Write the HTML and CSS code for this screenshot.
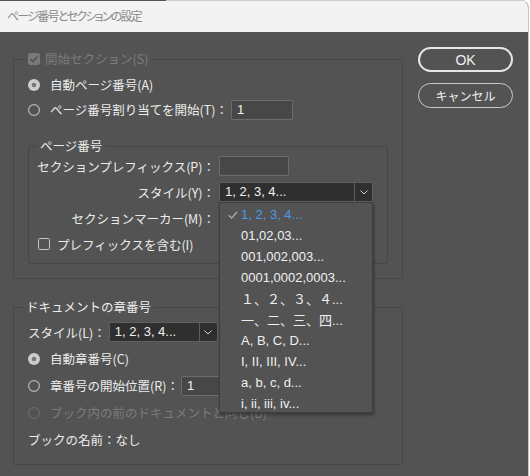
FILE: index.html
```html
<!DOCTYPE html>
<html lang="ja">
<head>
<meta charset="utf-8">
<title>ページ番号とセクションの設定</title>
<link rel="stylesheet" href="styles.css">
</head>
<body>
<div class="window">
  <div class="titlebar">ページ番号とセクションの設定</div>
  <div class="content">
    <div class="left">
      <fieldset class="group g1">
        <legend class="lg lg1">
          <svg class="cb" width="12" height="12" viewBox="0 0 12 12"><rect x="0.5" y="0.5" width="11" height="11" rx="1.5" fill="#7a7a7a" stroke="#7a7a7a"/><path d="M2.6 6.2 L5 8.5 L9.4 3.6" fill="none" stroke="#565656" stroke-width="1.8"/></svg>
          <span class="disabled">開始セクション(S)</span>
        </legend>
        <div class="row">
          <svg class="radio" width="12" height="12" viewBox="0 0 12 12"><circle cx="6" cy="6" r="6" fill="#cccccc"/><circle cx="6" cy="6" r="2.3" fill="#767676"/></svg>
          <span>自動ページ番号(A)</span>
        </div>
        <div class="row">
          <svg class="radio" width="12" height="12" viewBox="0 0 12 12"><circle cx="6" cy="6" r="5.4" fill="none" stroke="#b8b8b8" stroke-width="1.2"/></svg>
          <span>ページ番号割り当てを開始(T)：</span>
          <span class="input in1">1</span>
        </div>
        <fieldset class="group g2">
          <legend class="lg lg2">ページ番号</legend>
          <div class="frow">
            <span class="flabel">セクションプレフィックス(P)：</span>
            <span class="input in2"></span>
          </div>
          <div class="frow">
            <span class="flabel">スタイル(Y)：</span>
            <span class="select sel1"><span class="sel-text">1, 2, 3, 4...</span><span class="sel-arrow"><svg width="8" height="5" viewBox="0 0 8 5"><path d="M0.5 0.5 L4 4 L7.5 0.5" fill="none" stroke="#cfcfcf" stroke-width="1"/></svg></span></span>
          </div>
          <div class="frow">
            <span class="flabel">セクションマーカー(M)：</span>
          </div>
          <div class="frow crow">
            <svg class="cb" width="12" height="12" viewBox="0 0 12 12"><rect x="0.5" y="0.5" width="11" height="11" rx="1" fill="none" stroke="#c4c4c4"/></svg>
            <span>プレフィックスを含む(I)</span>
          </div>
        </fieldset>
      </fieldset>

      <fieldset class="group g3">
        <legend class="lg lg3">ドキュメントの章番号</legend>
        <div class="row3 first">
          <span>スタイル(L)：</span>
          <span class="select sel2"><span class="sel-text">1, 2, 3, 4...</span><span class="sel-arrow"><svg width="8" height="5" viewBox="0 0 8 5"><path d="M0.5 0.5 L4 4 L7.5 0.5" fill="none" stroke="#cfcfcf" stroke-width="1"/></svg></span></span>
        </div>
        <div class="row3">
          <svg class="radio" width="12" height="12" viewBox="0 0 12 12"><circle cx="6" cy="6" r="6" fill="#cccccc"/><circle cx="6" cy="6" r="2.3" fill="#767676"/></svg>
          <span>自動章番号(C)</span>
        </div>
        <div class="row3">
          <svg class="radio" width="12" height="12" viewBox="0 0 12 12"><circle cx="6" cy="6" r="5.4" fill="none" stroke="#b8b8b8" stroke-width="1.2"/></svg>
          <span>章番号の開始位置(R)：</span>
          <span class="input in3">1</span>
        </div>
        <div class="row3">
          <svg class="radio" width="12" height="12" viewBox="0 0 12 12"><circle cx="6" cy="6" r="5.4" fill="none" stroke="#6a6a6a" stroke-width="1.2"/></svg>
          <span class="disabled">ブック内の前のドキュメントと同じ(D)</span>
        </div>
        <div class="row3 last">
          <span>ブックの名前：なし</span>
        </div>
      </fieldset>
    </div>

    <div class="buttons">
      <div class="btn primary">OK</div>
      <div class="btn">キャンセル</div>
    </div>
  </div>

  <div class="dropdown">
    <div class="item selected"><span class="check"><svg width="10" height="8" viewBox="0 0 10 8"><path d="M0.8 4.2 L3.6 7 L9.2 0.8" fill="none" stroke="#a0a0a0" stroke-width="1.6"/></svg></span>1, 2, 3, 4...</div>
    <div class="item"><span class="check"></span>01,02,03...</div>
    <div class="item"><span class="check"></span>001,002,003...</div>
    <div class="item"><span class="check"></span>0001,0002,0003...</div>
    <div class="item"><span class="check"></span>１、２、３、４...</div>
    <div class="item"><span class="check"></span>一、二、三、四...</div>
    <div class="item"><span class="check"></span>A, B, C, D...</div>
    <div class="item"><span class="check"></span>I, II, III, IV...</div>
    <div class="item"><span class="check"></span>a, b, c, d...</div>
    <div class="item"><span class="check"></span>i, ii, iii, iv...</div>
  </div>
</div>
</body>
</html>
```

FILE: styles.css
```css
* { box-sizing: border-box; }
html, body { margin: 0; padding: 0; }
body {
  width: 530px;
  height: 476px;
  background: #ffffff;
  overflow: hidden;
  font-family: "Noto Sans CJK JP", "Noto Sans", sans-serif;
  font-size: 12.5px;
  color: #ececec;
  white-space: nowrap;
}
.window {
  position: relative;
  width: 529px;
  height: 476px;
  background: #535353;
  border-right: 1px solid #c8c8c8;
  border-top-right-radius: 8px;
  overflow: hidden;
}
.titlebar {
  height: 32px;
  line-height: 32px;
  padding-left: 7px;
  background: #f3f3f3 linear-gradient(to right, #555555 166px, #cfcfcf 166px) no-repeat top left / 100% 1px;
  color: #8a8a8a;
  font-size: 12px;
  font-feature-settings: "palt";
  letter-spacing: -1.75px;
}
.content {
  display: flex;
  align-items: flex-start;
}
.left {
  width: 403px;
  padding-left: 13px;
}
.group {
  margin: 0;
  min-width: 0;
  border: 1px solid #474747;
  border-radius: 2px;
}
.lg {
  line-height: 14px;
  padding: 0 3px;
  display: flex;
  align-items: center;
  gap: 5px;
}
.g1 {
  width: 390px;
  margin-top: 20px;
  padding: 6px 14px 14px 14px;
}
.lg1 { margin-left: -3px; }
.g2 {
  margin-top: 17px;
  padding: 0 10px 6px 6px;
}
.lg2 { margin-left: 2px; }
.g3 {
  width: 390px;
  margin-top: 21px;
  padding: 5px 14px 12px 14px;
}
.lg3 { margin-left: -5px; }
.disabled { color: #7b7b7b; }
.row {
  height: 25px;
  display: flex;
  align-items: center;
}
.radio { flex: none; margin-right: 10px; }
.cb { flex: none; }
.frow {
  height: 26px;
  display: flex;
  align-items: center;
}
.flabel {
  flex: none;
  width: 180px;
  display: flex;
  justify-content: flex-end;
  margin-right: 4px;
}
.crow { padding-left: 3px; }
.crow .cb { margin-right: 7px; }
.row3 {
  height: 27px;
  display: flex;
  align-items: center;
}
.row3.first { height: 26px; }
.row3.last { height: 26px; }
.input {
  flex: none;
  height: 20px;
  line-height: 18px;
  border: 1px solid #6c6c6c;
  border-radius: 2px;
  background: #474747;
  padding-left: 5px;
  color: #f2f2f2;
  font-family: "Liberation Sans", sans-serif;
  font-size: 13px;
}
.in1 { width: 62px; margin-left: 3px; }
.in2 { width: 70px; }
.in3 { width: 62px; margin-left: 2px; }
.select {
  flex: none;
  height: 20px;
  display: flex;
  border: 1px solid #5e5e5e;
  border-radius: 2px;
  background: #2f2f2f;
}
.sel1 { width: 154px; }
.sel2 { width: 109px; margin-left: 3px; }
.sel-text {
  flex: 1;
  line-height: 18px;
  padding-left: 5px;
  color: #f2f2f2;
  font-family: "Liberation Sans", sans-serif;
  font-size: 13px;
}
.sel-arrow {
  width: 18px;
  border-left: 1px solid #5e5e5e;
  display: flex;
  align-items: center;
  justify-content: center;
}
.buttons {
  margin-left: 15px;
  padding-top: 15px;
  display: flex;
  flex-direction: column;
  gap: 11px;
}
.btn {
  width: 95px;
  height: 25px;
  border: 1px solid #c8c8c8;
  border-radius: 13px;
  display: flex;
  align-items: center;
  justify-content: center;
  color: #f0f0f0;
  font-size: 12px;
}
.btn.primary {
  border: 2px solid #e6e6e6;
  font-family: "Liberation Sans", sans-serif;
  font-size: 14px;
}
.dropdown {
  position: absolute;
  left: 219px;
  top: 202px;
  width: 154px;
  height: 211px;
  padding-top: 1px;
  background: #535353;
  border: 1px solid #3e3e3e;
  box-shadow: 1px 2px 3px rgba(0, 0, 0, 0.35);
  font-family: "Liberation Sans", "Noto Sans CJK JP", sans-serif;
}
.item {
  height: 21px;
  display: flex;
  align-items: center;
  color: #f0f0f0;
  font-size: 13px;
}
.item.selected { color: #4c9ae6; }
.check {
  width: 21px;
  padding-left: 8px;
  display: flex;
  align-items: center;
}
```
